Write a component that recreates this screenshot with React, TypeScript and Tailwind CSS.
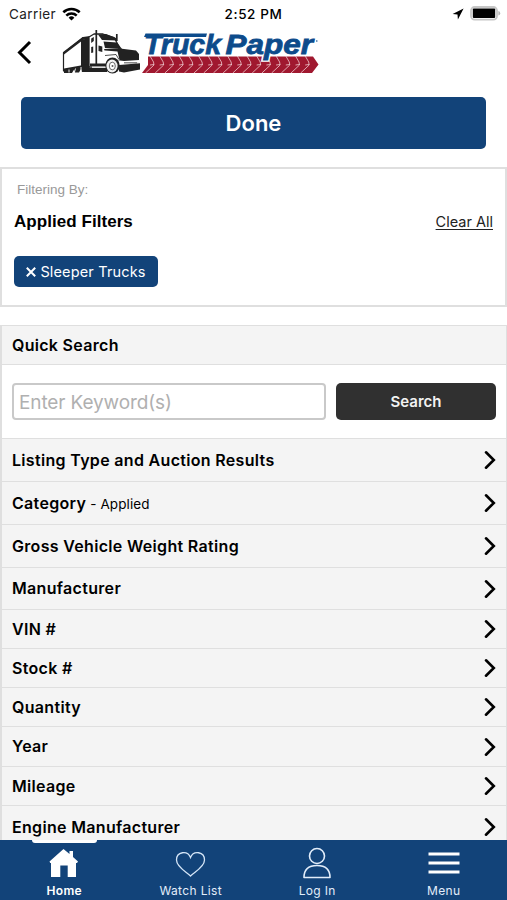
/* ── Filter sections, in display order ── */
const sections = [
  { label: "Listing Type and Auction Results", height: "h-[43px]" },
  { label: "Category", note: "- Applied", height: "h-[43px]" },
  { label: "Gross Vehicle Weight Rating", height: "h-[43px]" },
  { label: "Manufacturer", height: "h-[42px]" },
  { label: "VIN #", height: "h-[39px]" },
  { label: "Stock #", height: "h-[39px]" },
  { label: "Quantity", height: "h-[39px]" },
  { label: "Year", height: "h-[40px]" },
  { label: "Mileage", height: "h-[39px]" },
  { label: "Engine Manufacturer", height: "h-[43px]" },
];

function StatusBar() {
  return (
    <div className="grid h-7 shrink-0 grid-cols-3 items-center px-[9px] text-[13.500px] text-[#222]">
      <div className="flex items-center gap-[6px]">
        <span className="tracking-[0.400px]">Carrier</span>
        <svg width="19" height="14" viewBox="0 0 19 14" fill="none" stroke="#000" strokeWidth="2.600">
          <path d="M1.300 5.200a12 12 0 0 1 16.400 0" />
          <path d="M4.300 8.600a7.600 7.600 0 0 1 10.400 0" />
          <path d="M9.500 13.600 6.600 10.700a4.200 4.200 0 0 1 5.800 0z" fill="#000" stroke="none" />
        </svg>
      </div>
      <span className="text-center font-medium tracking-[0.600px] whitespace-nowrap text-black">
        2:52 PM
      </span>
      <div className="flex items-center justify-end gap-[6px] pb-px">
        <svg width="12" height="12" viewBox="0 0 12 12">
          <path d="M11.600.6.600 6l4.900.5.400 5z" fill="#000" />
        </svg>
        <svg width="31" height="15" viewBox="0 0 31 15" className="-mr-[3px]">
          <rect x="1" y="1" width="26" height="12.600" rx="3.600" fill="#fff" stroke="#c6c6c6" strokeWidth="1.800" />
          <rect x="2.800" y="2.600" width="22.400" height="9.400" rx="1" fill="#000" />
          <path d="M28.400 5v4.600q1.800-.6 1.800-2.300T28.400 5z" fill="#b5b5b5" />
        </svg>
      </div>
    </div>
  );
}

function Truck() {
  return (
    <g strokeLinejoin="round">
      {/* Trailer */}
      <path d="M1.500 23.500 21 8.500h6v30L1.500 42z" fill="#fff" stroke="#222" strokeWidth="1.200" />
      <path d="M1 24 21 8l7-1v2.500L21 11 2 25.500z" fill="#222" />
      <path d="M19 11.500l8-3V36l-8 1.500z" fill="#222" />
      <path d="M2 39.500 27 35v8h-7l-1-3-2 3.500h-4l-1-3-2 3.500H2z" fill="#222" />
      <path d="M7 40.500v3M13.500 39.500l-1 3.500M19 38v4" stroke="#fff" strokeWidth=".9" />
      {/* Cab */}
      <path d="M27 38V8l5-3h9l11 3.500 5 9v12L45 38z" fill="#fff" stroke="#222" strokeWidth="1.300" />
      <path d="M36 5.500l8-.5 10 4 1 2.500-15-.5z" fill="#222" />
      <path d="M41.500 12.500l13.500 1 5 6.500-17-1z" fill="#222" />
      <path d="M29.200 9.500l2.600-1.500v4l-2.600 2zM29.200 18l2-.5v6l-2 .5z" fill="#222" />
      <path d="M36.500 16.500l3.800 1v5.500l-3.800-1z" fill="#222" />
      <path d="M34.300 1v34M54.800 5v7" stroke="#222" strokeWidth="1.700" />
      <path d="M28 34.500h16v2.500H28zM22 39h23v4H24z" fill="#222" />
      <path d="M30 38.200h14" stroke="#fff" strokeWidth="1.200" />
      {/* Hood, grille and bumper */}
      <path d="M42 20l16-.5 16 2 3 3.500v8l-14 2-16-4z" fill="#222" />
      <path d="M43 21.500l12.500 1 2 8.500-11-.5-3.500 3z" fill="#fff" />
      <path d="M43 26.500l11-1 3 5" fill="none" stroke="#222" strokeWidth=".8" />
      <path d="M54 31l8 1 15-1v2.300l-15 2.500-6-1.500z" fill="#fff" />
      <path d="M62 33h13v1.500H62z" fill="#888" />
      <path d="M57 36l21-1.800v6.300L62 43.500l-5-1z" fill="#222" />
      {/* Wheels */}
      <ellipse cx="50.500" cy="36.500" rx="7.200" ry="8" fill="#222" />
      <ellipse cx="50" cy="37" rx="5.600" ry="6.500" fill="#f2f2f2" />
      <ellipse cx="50.300" cy="37" rx="3" ry="3.800" fill="#fff" stroke="#444" strokeWidth=".8" />
      <circle cx="50.500" cy="37" r="1" fill="#555" />
    </g>
  );
}

function Logo() {
  const treads = Array.from({ length: 17 }, (_, i) => 91 + i * 9.7);
  return (
    <svg width="260" height="48" viewBox="0 0 260 48" aria-label="Truck Paper">
      <Truck />
      {/* Tyre tread band */}
      <path d="M86 27.500h165l5.500 8-6.500 8.500H80l6-8z" fill="#a0182f" />
      {treads.map((x) => (
        <path
          key={x}
          d={`M${x - 3} 27l3.500 6 .5 3-8.500 8M${x + 1} 35.500l-4 .5`}
          fill="none"
          stroke="#f3d5da"
          strokeWidth=".75"
        />
      ))}
      {/* Wordmark, white halo under blue letters */}
      <g
        fontFamily="Liberation Sans, Arial, sans-serif"
        fontWeight="bold"
        fontStyle="italic"
        fontSize="27.500"
      >
        {["#fff", "#0d4b8b"].map((color) => (
          <g key={color} fill={color} stroke={color} strokeWidth={color === "#fff" ? 3.5 : 0.8}>
            <text x="82" y="24.800" textLength="77" lengthAdjust="spacingAndGlyphs">
              Truck
            </text>
            <text x="163.500" y="24.800" textLength="87.500" lengthAdjust="spacingAndGlyphs">
              Paper
            </text>
          </g>
        ))}
      </g>
      <path d="M83.500 4.500H145l-1 3.400H82z" fill="#0d4b8b" />
      <circle cx="254.800" cy="12" r=".8" fill="#0d4b8b" />
    </svg>
  );
}

function Chevron() {
  return (
    <svg width="12" height="19" viewBox="0 0 12 19" fill="none" stroke="#000" strokeWidth="2.600">
      <path d="M2 2.300 9.800 10 2 17.700" strokeLinecap="round" />
    </svg>
  );
}

/* ── Bottom navigation ── */
const tabs = [
  {
    label: "Home",
    active: true,
    icon: (
      <path
        d="M1.500 14.500 15.500 2l6 5V4H25v6l5 4.500-1 1.500h-1v14h-8.300V18.500h-7.400V30H3V16h-.8z"
        fill="#fff"
      />
    ),
  },
  {
    label: "Watch List",
    icon: (
      <path
        d="M15.500 29C11.500 25 1.500 20 1.500 13c0-8.500 11-10 14-2.500C18.500 3 29.500 4.500 29.500 13c0 7-10 12-14 16z"
        fill="none"
        stroke="#d4e5f7"
        strokeWidth="1.300"
      />
    ),
  },
  {
    label: "Log In",
    icon: (
      <g fill="none" stroke="#e2edfa" strokeWidth="1.600">
        <circle cx="16" cy="9" r="7.500" />
        <path d="M3 30.500c0-8 5-12 13-12s13 4 13 12z" strokeLinejoin="round" />
      </g>
    ),
  },
  {
    label: "Menu",
    icon: <path d="M.5 7h31M.5 16h31M.5 25h31" stroke="#fff" strokeWidth="3" />,
  },
];

function TabBar() {
  return (
    <nav className="grid h-[60px] shrink-0 grid-cols-4 bg-[#124379] pl-px text-white">
      {tabs.map((tab) => (
        <div key={tab.label} className="relative flex flex-col items-center pt-[7px]">
          {tab.active && <span className="absolute top-0 h-[3px] w-[65px] rounded-b bg-white" />}
          <svg width="32" height="32" viewBox="0 0 32 32">
            {tab.icon}
          </svg>
          <span
            className={`mt-[4px] text-[12px] leading-4 ${tab.active ? "font-semibold tracking-[0.300px]" : "tracking-[0.350px] text-[#e2edfa]"}`}
          >
            {tab.label}
          </span>
        </div>
      ))}
    </nav>
  );
}

export default function App() {
  return (
    <div className="flex h-[900px] w-[507px] flex-col overflow-hidden bg-white font-['Inter',sans-serif] text-black">
      <StatusBar />

      <header className="flex h-[55px] shrink-0 items-start pl-[17px]">
        <svg width="15" height="25" viewBox="0 0 15 25" fill="none" stroke="#000" strokeWidth="3" className="mt-[12px]">
          <path d="M13 2 2.500 12.500 13 23" />
        </svg>
        <div className="ml-[30px] mt-[1px]">
          <Logo />
        </div>
      </header>

      <main className="flex min-h-0 flex-1 flex-col overflow-hidden pt-[14px]">
        <button
          type="button"
          className="mx-[21px] h-[52px] shrink-0 rounded-[5px] bg-[#124379] text-[22px] font-semibold text-white"
        >
          Done
        </button>

        {/* Applied filters */}
        <section className="mt-[18px] flex h-[140px] shrink-0 flex-col border-2 border-[#dfdfdf] px-3">
          <p className="mt-[13px] pl-[3px] font-['Liberation_Sans',sans-serif] text-[13.500px] leading-[16px] text-[#999]">
            Filtering By:
          </p>
          <div className="mt-[12px] flex h-[24px] items-center justify-between">
            <h2 className="font-['Liberation_Sans',sans-serif] text-[17px] font-bold tracking-[0.050px]">
              Applied Filters
            </h2>
            <a href="#clear" className="text-[14.500px] text-[#222] underline underline-offset-2">
              Clear All
            </a>
          </div>
          <button
            type="button"
            className="mt-[22px] flex h-[31px] w-[144px] items-center justify-center gap-[4px] rounded-[5px] bg-[#124379] text-[14.500px] text-white"
          >
            <svg width="10" height="10" viewBox="0 0 10 10" stroke="#fff" strokeWidth="2">
              <path d="M.8.8l8.400 8.400M9.200.8.8 9.200" />
            </svg>
            <span className="tracking-[0.150px]">Sleeper Trucks</span>
          </button>
        </section>

        {/* Quick search and filter list */}
        <section className="mt-[18px] flex shrink-0 flex-col border-t border-r border-l-2 border-[#dfdfdf]">
          <h2 className="flex h-[39px] items-center border-b border-[#dfdfdf] bg-[#f4f4f4] pb-px pl-[10px] text-[16px] font-semibold tracking-[0.300px]">
            Quick Search
          </h2>
          <div className="flex h-[73px] items-center gap-[10px] pr-[10px] pl-[10px]">
            <input
              type="text"
              placeholder="Enter Keyword(s)"
              className="h-[37px] w-[314px] rounded-[4px] border-2 border-[#c9c9c9] px-[5px] pt-[2px] text-[19px] tracking-[-0.120px] placeholder:text-[#b0b0b0]"
            />
            <button
              type="button"
              className="h-[37px] flex-1 rounded-[5px] bg-[#303030] pt-[2px] text-[15px] font-semibold text-[#f2f2f2]"
            >
              Search
            </button>
          </div>
          {sections.map((section) => (
            <div
              key={section.label}
              className={`flex items-center justify-between border-t border-[#dfdfdf] bg-[#f4f4f4] pr-[10px] pb-px pl-[10px] ${section.height}`}
            >
              <span className="text-[16px] font-semibold tracking-[0.320px]">
                {section.label}
                {section.note && (
                  <span className="text-[13.500px] font-normal tracking-[0.100px]"> {section.note}</span>
                )}
              </span>
              <Chevron />
            </div>
          ))}
        </section>
      </main>

      <TabBar />
    </div>
  );
}
